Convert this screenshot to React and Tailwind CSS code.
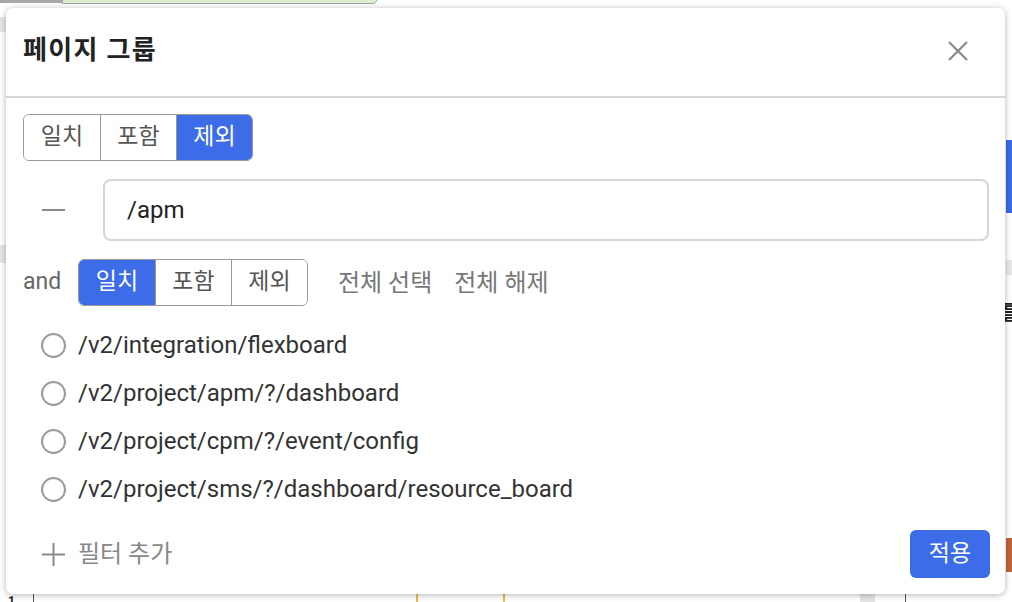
import React from "react";
import { useState } from "react";

const FONT = { fontFamily: "Roboto, 'Noto Sans CJK KR', 'Noto Sans', sans-serif" };

const MODES = ["일치", "포함", "제외"];

const PAGES = [
  "/v2/integration/flexboard",
  "/v2/project/apm/?/dashboard",
  "/v2/project/cpm/?/event/config",
  "/v2/project/sms/?/dashboard/resource_board",
];

function Segmented({ value, onChange }) {
  return (
    <div className="flex h-[47px] rounded-[6px] border-[1.5px] border-[#9a9a9a] overflow-hidden">
      {MODES.map((m, i) => (
        <button
          key={m}
          onClick={() => onChange(m)}
          className={
            "w-[76px] flex items-center justify-center text-[23px] " +
            (i > 0 ? "border-l-[1.5px] border-[#9a9a9a] " : "") +
            (value === m ? "bg-[#3d6ce9] text-white border-[#3d6ce9]" : "bg-white text-[#555]")
          }
        >
          {m}
        </button>
      ))}
    </div>
  );
}

export default function App() {
  const [mode1, setMode1] = useState("제외");
  const [mode2, setMode2] = useState("일치");
  const [query, setQuery] = useState("/apm");
  const [picked, setPicked] = useState(null);

  return (
    <div className="relative w-[1012px] h-[602px] bg-white overflow-hidden" style={FONT}>
      {/* page behind the dialog */}
      <div className="absolute left-0 top-0 w-[62px] h-[3px] bg-[#a8a8a8]" />
      <div className="absolute left-[62px] top-[-4px] w-[316px] h-[8px] bg-[#dcefd5] border border-[#a0a0a0] rounded-br-[6px]" />
      <div className="absolute left-0 top-[17px] w-[6px] h-[15px] bg-[#e6e6e6]" />
      <div className="absolute left-0 top-[245px] w-[6px] h-[18px] bg-[#e6e6e6]" />
      <div className="absolute right-0 top-[140px] w-[6px] h-[73px] bg-[#3d6ce9]" />
      <div className="absolute right-0 top-[260px] w-[6px] h-[15px] bg-[#e8e8e8]" />
      <div className="absolute right-[-8px] top-[298px] text-[20px] font-bold text-[#222]">를</div>
      <div className="absolute right-0 top-[538px] w-[6px] h-[34px] bg-[#c0643c]" />
      <div className="absolute left-[8px] top-[592px] text-[12px] font-bold text-[#222]">1</div>
      <div className="absolute left-[33px] top-[594px] w-[1px] h-[10px] bg-[#555]" />
      <div className="absolute left-[416px] top-[594px] w-[2px] h-[10px] bg-[#f0b840]" />
      <div className="absolute left-[503px] top-[594px] w-[2px] h-[10px] bg-[#f0b840]" />
      <div className="absolute left-[860px] top-[594px] w-[15px] h-[10px] bg-[#e4e4e4]" />
      <div className="absolute left-[905px] top-[594px] w-[1px] h-[10px] bg-[#555]" />

      {/* dialog */}
      <div className="absolute left-[6px] top-[8px] w-[999px] h-[586px] bg-white rounded-[7px] shadow-[0_1px_6px_rgba(0,0,0,0.3)] flex flex-col">
        <div className="h-[90px] flex items-center justify-between pl-[17px] pr-[36px] border-b-2 border-[#d6d6d6] shrink-0">
          <h2 className="text-[26px] font-semibold text-[#222] tracking-[1.3px] mt-[-4px]">페이지 그룹</h2>
          <button className="w-[22px] h-[22px] text-[#8a8a8a] mt-[-2px]">
            <svg viewBox="0 0 22 22" width="22" height="22" fill="none" stroke="currentColor" strokeWidth="2.2">
              <path d="M2 2 L20 20 M20 2 L2 20" />
            </svg>
          </button>
        </div>

        <div className="flex flex-col pl-[17px] pr-[16px] pt-[16px]">
          <div className="flex">
            <Segmented value={mode1} onChange={setMode1} />
          </div>

          <div className="flex items-center mt-[18px]">
            <div className="w-[80px] pl-[19px] shrink-0">
              <svg width="23" height="4" viewBox="0 0 23 4">
                <path d="M0 2 H23" stroke="#8a8a8a" strokeWidth="2" />
              </svg>
            </div>
            <input
              value={query}
              onChange={(e) => setQuery(e.target.value)}
              className="flex-1 h-[62px] rounded-[8px] border-2 border-[#d6d6d6] px-[22px] text-[24px] text-[#222] outline-none"
            />
          </div>

          <div className="flex items-center mt-[18px]">
            <span className="w-[55px] text-[23px] text-[#666]">and</span>
            <Segmented value={mode2} onChange={setMode2} />
            <button className="ml-[30px] text-[24px] text-[#777]">전체 선택</button>
            <button className="ml-[22px] text-[24px] text-[#777]">전체 해제</button>
          </div>

          <ul className="mt-[15px]">
            {PAGES.map((p) => (
              <li key={p} className="h-[48px] flex items-center cursor-pointer" onClick={() => setPicked(p)}>
                <span className="ml-[18px] w-[25px] h-[25px] rounded-full border-2 border-[#9a9a9a] flex items-center justify-center">
                  {picked === p && <span className="w-[13px] h-[13px] rounded-full bg-[#3d6ce9]" />}
                </span>
                <span className="ml-[12px] text-[24px] text-[#333]">{p}</span>
              </li>
            ))}
          </ul>

          <div className="flex items-center justify-between mt-[17px]">
            <button className="flex items-center text-[24px] text-[#888]">
              <svg className="ml-[19px]" width="23" height="23" viewBox="0 0 23 23">
                <path d="M0 11.5 H23 M11.5 0 V23" stroke="#8a8a8a" strokeWidth="2" />
              </svg>
              <span className="ml-[13px]">필터 추가</span>
            </button>
            <button className="w-[80px] h-[48px] rounded-[6px] bg-[#3d6ce9] text-white text-[23px] mr-[-1px]">
              적용
            </button>
          </div>
        </div>
      </div>
    </div>
  );
}
